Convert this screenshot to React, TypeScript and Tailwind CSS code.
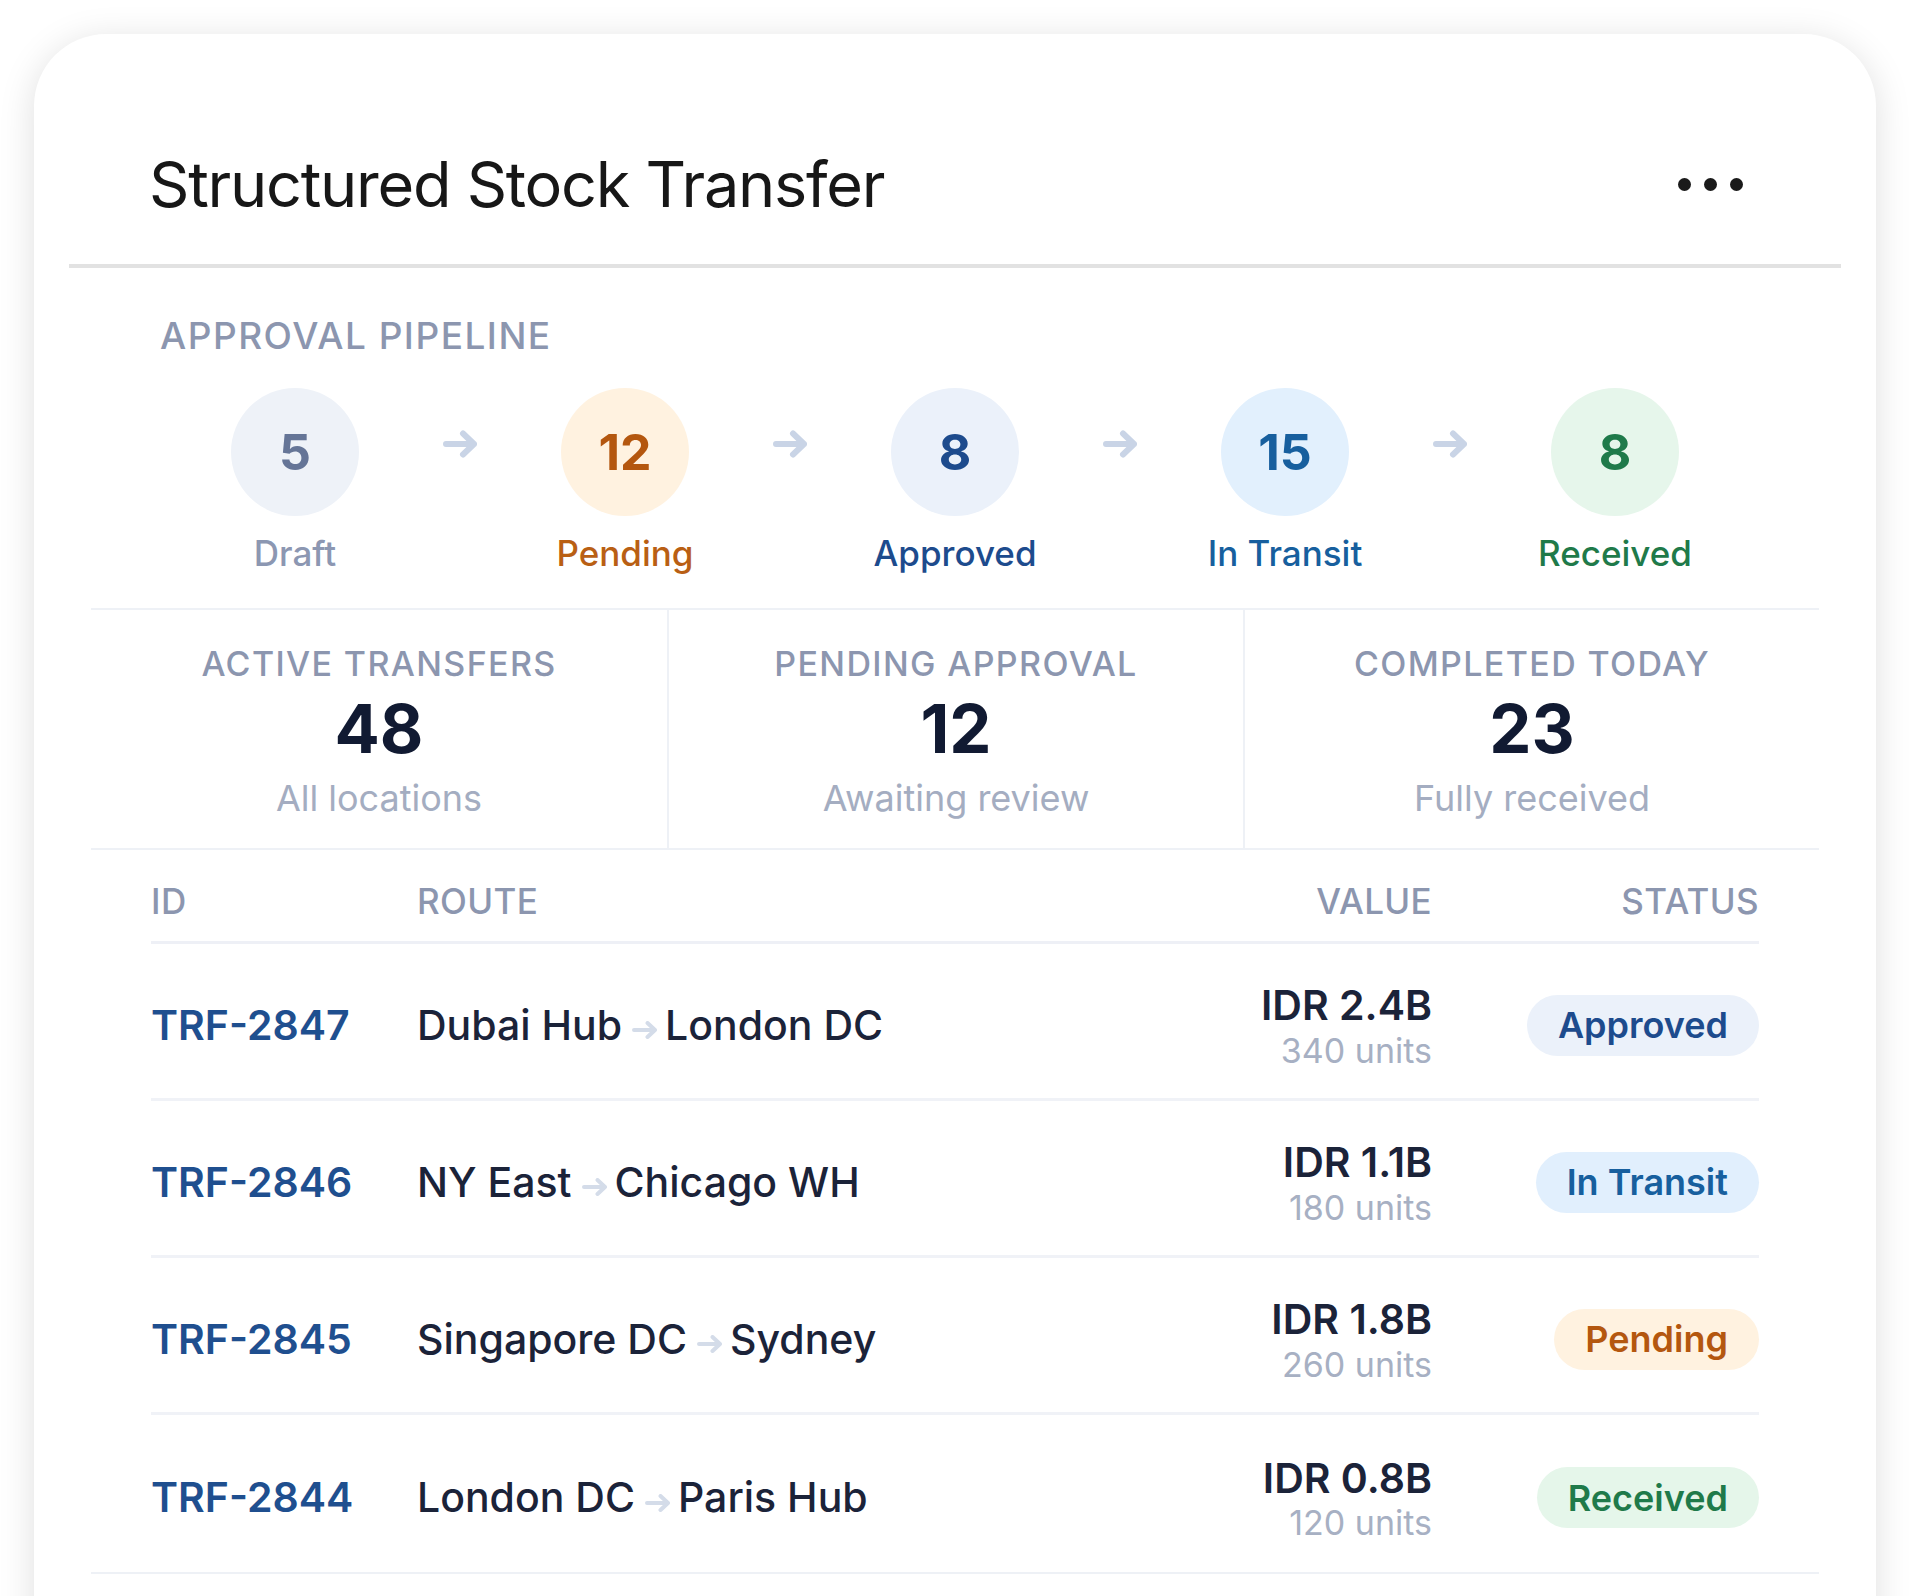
import React from "react";

type Stage = {
  count: number;
  label: string;
  circle: string;
  num: string;
  text: string;
};

const stages: Stage[] = [
  { count: 5, label: "Draft", circle: "bg-[#eef2f8]", num: "text-[#657597]", text: "text-[#8c97b2]" },
  { count: 12, label: "Pending", circle: "bg-[#fff2e0]", num: "text-[#b4570f]", text: "text-[#b95f14]" },
  { count: 8, label: "Approved", circle: "bg-[#ebf1fa]", num: "text-[#1d4b8d]", text: "text-[#1d4b8d]" },
  { count: 15, label: "In Transit", circle: "bg-[#e2f0fd]", num: "text-[#175f9e]", text: "text-[#175f9e]" },
  { count: 8, label: "Received", circle: "bg-[#e6f6eb]", num: "text-[#1f7a4a]", text: "text-[#1f7a4a]" },
];

const stats = [
  { label: "ACTIVE TRANSFERS", value: "48", sub: "All locations" },
  { label: "PENDING APPROVAL", value: "12", sub: "Awaiting review" },
  { label: "COMPLETED TODAY", value: "23", sub: "Fully received" },
];

type Status = "Approved" | "In Transit" | "Pending" | "Received";

const pillStyle: Record<Status, string> = {
  Approved: "bg-[#ebf1fa] text-[#1d4b8d]",
  "In Transit": "bg-[#e1effd] text-[#175f9e]",
  Pending: "bg-[#fff2e0] text-[#b4570f]",
  Received: "bg-[#e5f6ea] text-[#1f7a4a]",
};

const transfers: { id: string; from: string; to: string; value: string; units: string; status: Status }[] = [
  { id: "TRF-2847", from: "Dubai Hub", to: "London DC", value: "IDR 2.4B", units: "340 units", status: "Approved" },
  { id: "TRF-2846", from: "NY East", to: "Chicago WH", value: "IDR 1.1B", units: "180 units", status: "In Transit" },
  { id: "TRF-2845", from: "Singapore DC", to: "Sydney", value: "IDR 1.8B", units: "260 units", status: "Pending" },
  { id: "TRF-2844", from: "London DC", to: "Paris Hub", value: "IDR 0.8B", units: "120 units", status: "Received" },
];

function StageArrow() {
  return (
    <svg width="34" height="28" viewBox="0 0 34 28" fill="none">
      <path
        d="M3 14H31M20 3.5L31 14L20 24.5"
        stroke="#c9d4e6"
        strokeWidth="6"
        strokeLinecap="round"
        strokeLinejoin="round"
      />
    </svg>
  );
}

function RouteArrow() {
  return (
    <svg width="25" height="18" viewBox="0 0 25 18" fill="none">
      <path
        d="M2 9H23M15.5 2L23 9L15.5 16"
        stroke="#d4dce9"
        strokeWidth="4"
        strokeLinecap="round"
        strokeLinejoin="round"
      />
    </svg>
  );
}

export default function App() {
  return (
    <div className="min-h-screen bg-white px-[34px] pt-[34px] pb-[80px] font-['Inter',sans-serif]">
      <div className="rounded-[72px] bg-white px-[35px] pb-[140px] shadow-[0_6px_36px_rgba(0,0,0,0.13)]">
        {/* Card header */}
        <header className="flex items-center justify-between border-b-4 border-[#e2e2e2] pt-[113px] pb-[41px] pl-[80px] pr-[98px]">
          <h1 className="text-[63px] leading-[1.2] font-normal tracking-[-0.02em] text-[#171717]">
            Structured Stock Transfer
          </h1>
          <button className="flex items-center gap-[13px]" aria-label="More options">
            <span className="block h-[13px] w-[13px] rounded-full bg-[#1a1a1a]" />
            <span className="block h-[13px] w-[13px] rounded-full bg-[#1a1a1a]" />
            <span className="block h-[13px] w-[13px] rounded-full bg-[#1a1a1a]" />
          </button>
        </header>

        <div className="px-[22px]">
          {/* Approval pipeline */}
          <section className="px-[69px] pt-[46px] pb-[34px]">
            <h2 className="text-[37px] leading-[1.2] font-medium tracking-[0.04em] text-[#8c96af]">
              APPROVAL PIPELINE
            </h2>
            <div className="mt-[30px] flex justify-center">
              {stages.map((s, i) => (
                <React.Fragment key={s.label}>
                  {i > 0 && (
                    <div className="flex h-[128px] w-[130px] items-center justify-center pb-[16px]">
                      <StageArrow />
                    </div>
                  )}
                  <div className="flex w-[200px] flex-col items-center">
                    <div
                      className={`flex h-[128px] w-[128px] items-center justify-center rounded-full text-[50px] font-bold leading-none ${s.circle} ${s.num}`}
                    >
                      {s.count}
                    </div>
                    <div className={`mt-[16px] text-[35px] leading-[1.2] font-medium ${s.text}`}>{s.label}</div>
                  </div>
                </React.Fragment>
              ))}
            </div>
          </section>

          {/* Summary stats */}
          <section className="grid grid-cols-3 border-y-2 border-[#eef1f6]">
            {stats.map((st, i) => (
              <div
                key={st.label}
                className={`flex flex-col items-center pt-[34px] pb-[28px] ${i > 0 ? "border-l-2 border-[#eef1f6]" : ""}`}
              >
                <div className="text-[34px] leading-[1.2] font-medium tracking-[0.04em] text-[#8c96af]">{st.label}</div>
                <div className="mt-[10px] text-[67px] leading-none font-bold text-[#111a32]">{st.value}</div>
                <div className="mt-[15px] text-[36px] leading-[1.2] text-[#a4adc1]">{st.sub}</div>
              </div>
            ))}
          </section>

          {/* Transfers table */}
          <section className="border-b-2 border-[#eef1f6] px-[60px]">
            <div className="grid grid-cols-[266px_1fr_auto_327px] border-b-[3px] border-[#eef0f6] pt-[30px] pb-[19px] text-[35px] leading-[1.2] font-medium tracking-[0.01em] text-[#8c96af]">
              <div>ID</div>
              <div>ROUTE</div>
              <div className="text-right">VALUE</div>
              <div className="text-right">STATUS</div>
            </div>
            {transfers.map((t, i) => (
              <div
                key={t.id}
                className={`grid h-[157px] grid-cols-[266px_1fr_auto_327px] items-center pt-[9px] ${
                  i < transfers.length - 1 ? "border-b-[3px] border-[#f0f2f7]" : ""
                }`}
              >
                <div className="text-[41px] leading-[1.2] font-semibold text-[#1f4f8f]">{t.id}</div>
                <div className="flex items-center text-[41px] leading-[1.2] font-medium text-[#1b2339]">
                  <span>{t.from}</span>
                  <span className="mr-[8px] ml-[10px] mt-[10px] flex">
                    <RouteArrow />
                  </span>
                  <span>{t.to}</span>
                </div>
                <div className="flex flex-col items-end pt-[2px]">
                  <div className="text-[41px] leading-[1.2] font-semibold text-[#1b2339]">{t.value}</div>
                  <div className="text-[34px] leading-[1.2] text-[#a7b0c3]">{t.units}</div>
                </div>
                <div className="flex justify-end">
                  <span
                    className={`inline-flex h-[61px] items-center rounded-full px-[31px] text-[36px] font-semibold ${pillStyle[t.status]}`}
                  >
                    {t.status}
                  </span>
                </div>
              </div>
            ))}
          </section>
        </div>
      </div>
    </div>
  );
}
